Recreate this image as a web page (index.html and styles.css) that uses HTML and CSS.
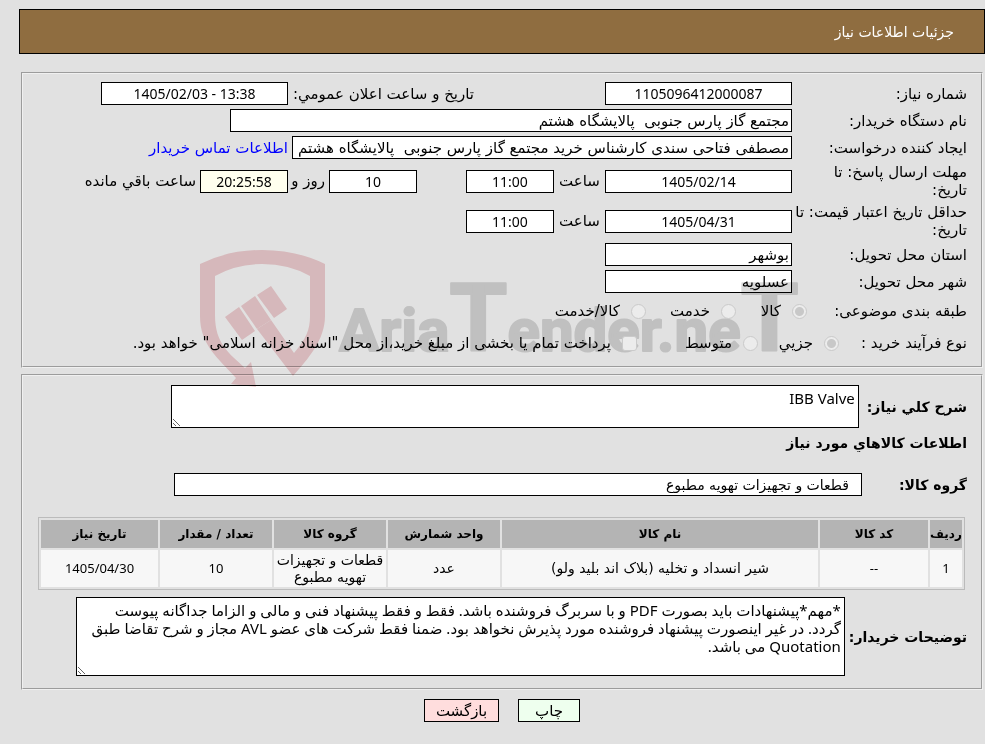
FILE: index.html
```html
<!DOCTYPE html>
<html lang="fa" dir="rtl">
<head>
    <meta charset="UTF-8">
    <meta name="viewport" content="width=device-width, initial-scale=1.0">
    <title>جزئیات اطلاعات نیاز</title>
    <link rel="stylesheet" href="styles.css">
</head>
<body>

    <div class="page">
        <h1 class="page-title">جزئیات اطلاعات نیاز</h1>

        <!-- Need details -->
        <fieldset class="details">
            <div class="row">
                <label class="caption" for="needNo">شماره نیاز:</label>
                <input class="box medium center" type="text" id="needNo" value="1105096412000087" readonly>
                <label class="announce" for="announceDate">تاریخ و ساعت اعلان عمومي:</label>
                <input class="box medium center" type="text" id="announceDate" dir="ltr" value="1405/02/03 - 13:38" readonly>
            </div>
            <div class="row">
                <label class="caption" for="buyer">نام دستگاه خریدار:</label>
                <input class="box buyer" type="text" id="buyer" value="مجتمع گاز پارس جنوبی  پالایشگاه هشتم" readonly>
            </div>
            <div class="row">
                <label class="caption" for="creator">ایجاد کننده درخواست:</label>
                <input class="box creator" type="text" id="creator" value="مصطفی فتاحی سندی کارشناس خرید مجتمع گاز پارس جنوبی  پالایشگاه هشتم" readonly>
                <a class="contact" href="#">اطلاعات تماس خریدار</a>
            </div>
            <div class="row tall">
                <label class="caption" for="replyDate">مهلت ارسال پاسخ: تا<br>تاریخ:</label>
                <input class="box medium center" type="text" id="replyDate" value="1405/02/14" readonly>
                <label class="hour" for="replyHour">ساعت</label>
                <input class="box small center" type="text" id="replyHour" value="11:00" readonly>
                <input class="box small center days" type="text" id="daysLeft" value="10" readonly>
                <label class="and" for="daysLeft">روز و</label>
                <input class="box small center timer" type="text" id="timeLeft" value="20:25:58" readonly>
                <label class="remaining" for="timeLeft">ساعت باقي مانده</label>
            </div>
            <div class="row tall">
                <label class="caption" for="priceDate">حداقل تاریخ اعتبار قیمت: تا<br>تاریخ:</label>
                <input class="box medium center" type="text" id="priceDate" value="1405/04/31" readonly>
                <label class="hour" for="priceHour">ساعت</label>
                <input class="box small center" type="text" id="priceHour" value="11:00" readonly>
            </div>
            <div class="row">
                <label class="caption" for="province">استان محل تحویل:</label>
                <input class="box medium" type="text" id="province" value="بوشهر" readonly>
            </div>
            <div class="row">
                <label class="caption" for="city">شهر محل تحویل:</label>
                <input class="box medium" type="text" id="city" value="عسلویه" readonly>
            </div>
            <div class="row options subject">
                <span class="caption">طبقه بندی موضوعی:</span>
                <label><input type="radio" name="subject" checked disabled>کالا</label>
                <label class="wide"><input type="radio" name="subject" disabled>خدمت</label>
                <label><input type="radio" name="subject" disabled>کالا/خدمت</label>
            </div>
            <div class="row options process">
                <span class="caption">نوع فرآیند خرید :</span>
                <label><input type="radio" name="process" checked disabled>جزیي</label>
                <label class="wide"><input type="radio" name="process" disabled>متوسط</label>
                <label class="treasury"><input type="checkbox" disabled>پرداخت تمام یا بخشی از مبلغ خرید،از محل "اسناد خزانه اسلامی" خواهد بود.</label>
            </div>
        </fieldset>

        <!-- Goods -->
        <fieldset class="goods">
            <div class="row note">
                <label for="summary">شرح كلي نیاز:</label>
                <textarea class="summary" id="summary" readonly>IBB Valve</textarea>
            </div>
            <h2>اطلاعات کالاهاي مورد نیاز</h2>
            <div class="row group">
                <label for="goodsGroup">گروه کالا:</label>
                <input class="box" type="text" id="goodsGroup" value="قطعات و تجهیزات تهویه مطبوع" readonly>
            </div>
            <table>
                <thead>
                    <tr>
                        <th class="col-row">ردیف</th>
                        <th class="col-code">کد کالا</th>
                        <th>نام کالا</th>
                        <th class="col-mid">واحد شمارش</th>
                        <th class="col-mid">گروه کالا</th>
                        <th class="col-mid">تعداد / مقدار</th>
                        <th class="col-date">تاریخ نیاز</th>
                    </tr>
                </thead>
                <tbody>
                    <tr>
                        <td class="num">1</td>
                        <td class="num">--</td>
                        <td>شیر انسداد و تخلیه (بلاک اند بلید ولو)</td>
                        <td>عدد</td>
                        <td>قطعات و تجهیزات<br>تهویه مطبوع</td>
                        <td class="num">10</td>
                        <td class="num">1405/04/30</td>
                    </tr>
                </tbody>
            </table>
            <div class="row note">
                <label for="comments">توضیحات خریدار:</label>
                <textarea class="comments" id="comments" readonly>*مهم*پیشنهادات باید بصورت PDF و با سربرگ فروشنده باشد. فقط و فقط پیشنهاد فنی و مالی و الزاما جداگانه پیوست
گردد. در غیر اینصورت پیشنهاد فروشنده مورد پذیرش نخواهد بود. ضمنا فقط شرکت های عضو AVL مجاز و شرح تقاضا طبق
Quotation می باشد.</textarea>
            </div>
        </fieldset>

        <div class="buttons">
            <button class="print" type="button">چاپ</button>
            <button class="back" type="button">بازگشت</button>
        </div>

        <!-- Watermark -->
        <svg class="watermark" viewBox="0 0 610 140" aria-hidden="true">
            <g class="shield">
                <path d="M0 14 Q28 0 62 0 Q97 0 125 14 V66 C125 90 108 109 93 126 L57 79 L71 70 L94 103 C106 89 110 80 110 66 V26 Q89 14 62 14 Q36 14 15 26 V65 C15 94 29 103 45 118 L51 112 L56 137 L31 134 L36 128 C18 108 0 95 0 66 Z"/>
                <path d="M57 45 L71 36 L87 59 L74 68 Z"/>
                <path d="M41 56 L55 46 L71 70 L57 79 Z"/>
                <path d="M25 67 L39 57 L55 81 L42 90 Z"/>
            </g>
            <text class="brand" x="139" y="101" direction="ltr">Aria<tspan class="big">T</tspan>ender.ne<tspan class="big">T</tspan></text>
        </svg>
    </div>

</body>
</html>
```
FILE: styles.css
```css
* {
    box-sizing: border-box;
}
body {
    margin: 0;
    background-color: #e1e1e1;
    font-family: "DejaVu Sans", sans-serif;
    font-size: 15px;
    line-height: 18px;
    color: #000;
}
.page {
    position: relative;
    margin: 9px 0 0;
    padding-left: 19px;
}
.page-title {
    margin: 0 0 18px;
    padding: 13px 30px 12px;
    border: 1px solid #000;
    background-color: #8f6d40;
    color: #fff;
    font-size: 14px;
    font-weight: normal;
}
fieldset {
    margin: 0 2px 6px;
    padding: 6px 14px 7px;
    border: 2px groove #f0f0f0;
}
.row {
    display: flex;
    align-items: center;
    min-height: 27px;
}
.tall {
    min-height: 40px;
}
.caption {
    flex: 0 0 175px;
    white-space: nowrap;
}
input,
textarea,
button {
    font-family: inherit;
    font-size: 15px;
    line-height: 18px;
    color: #000;
}
.box {
    height: 23px;
    padding: 1px 2px;
    border: 1px solid #000;
    background-color: #fff;
}
.center {
    text-align: center;
    font-family: "Noto Sans", sans-serif;
    font-size: 14px;
}
.medium {
    width: 187px;
}
.small {
    width: 88px;
}
.buyer {
    width: 562px;
}
.creator {
    width: 500px;
}
.contact {
    margin-right: 4px;
    color: #00f;
    text-decoration: none;
}
.announce {
    width: 317px;
    padding-left: 5px;
    text-align: left;
}
.hour {
    width: 51px;
    text-align: center;
}
.days {
    margin-right: 49px;
}
.and {
    width: 41px;
    padding-right: 4px;
    white-space: nowrap;
}
.timer {
    background-color: #ffffee;
}
.remaining {
    margin-right: 4px;
}

/* Radio and checkbox rows */
.options {
    min-height: 32px;
}
.options label {
    display: flex;
    align-items: center;
    gap: 11px;
    white-space: nowrap;
}
.options input {
    appearance: none;
    position: relative;
    z-index: 1;
    flex: none;
    width: 15px;
    height: 15px;
    margin: 0;
    border: 1px solid #cacaca;
    border-radius: 50%;
    background-color: #ececec;
}
.options input[type="checkbox"] {
    border-radius: 3px;
}
.options input:checked {
    background: radial-gradient(circle, #c8c8c8 4px, #ececec 5px);
}
.subject .caption {
    flex-basis: 160px;
}
.subject label {
    width: 71px;
}
.subject .wide {
    width: 90px;
}
.process .caption {
    flex-basis: 128px;
}
.process label {
    width: 81px;
}
.process .wide {
    width: 121px;
}
.process .treasury {
    width: auto;
}

/* Goods */
.goods {
    padding: 9px 14px 12px;
}
.note {
    gap: 4px;
    font-size: 14px;
    font-weight: bold;
}
textarea {
    display: block;
    margin: 0;
    padding: 3px;
    border: 1px solid #000;
    background-color: #fff;
    font-family: "Noto Sans", "DejaVu Sans", sans-serif;
    white-space: pre;
    overflow: hidden;
}
.summary {
    width: 688px;
    height: 43px;
    margin-right: 4px;
}
.comments {
    width: 769px;
    height: 79px;
}
h2 {
    margin: 6px 0 19px;
    font-size: 14px;
}
.group label {
    flex: 0 0 105px;
    font-size: 14px;
    font-weight: bold;
}
.group .box {
    width: 688px;
    padding-right: 12px;
    font-size: 14px;
}
table {
    width: calc(100% - 3px);
    margin: 19px 2px 7px 0;
    border: 1px solid #bbb;
    border-spacing: 2px;
    table-layout: fixed;
    text-align: center;
    font-size: 14px;
    line-height: 17px;
}
th,
td {
    padding: 1px 0;
}
th {
    height: 28px;
    background-color: #b4b4b4;
    font-size: 12px;
}
td {
    height: 37px;
    background-color: #f7f7f7;
}
.num {
    font-family: "Noto Sans", sans-serif;
    font-size: 13px;
}
.col-row {
    width: 32px;
}
.col-code {
    width: 108px;
}
.col-mid {
    width: 112px;
}
.col-date {
    width: 117px;
}
.buttons {
    display: flex;
    justify-content: center;
    gap: 19px;
    padding-top: 3px;
}
.buttons button {
    height: 23px;
    padding: 0;
    border: 1px solid #000;
}
.print {
    width: 62px;
    background-color: #eeffee;
}
.back {
    width: 75px;
    background-color: #ffdddd;
}

/* Watermark lies over the form */
.watermark {
    position: absolute;
    top: 241px;
    left: 200px;
    width: 610px;
    height: 140px;
    mix-blend-mode: multiply;
    pointer-events: none;
}
.shield {
    fill: #f3d1d4;
}
.brand {
    fill: #dadada;
    stroke: #dadada;
    stroke-width: 2px;
    stroke-linejoin: round;
    font-family: Roboto, sans-serif;
    font-size: 60px;
    font-weight: bold;
}
.brand .big {
    font-size: 94px;
}
```
